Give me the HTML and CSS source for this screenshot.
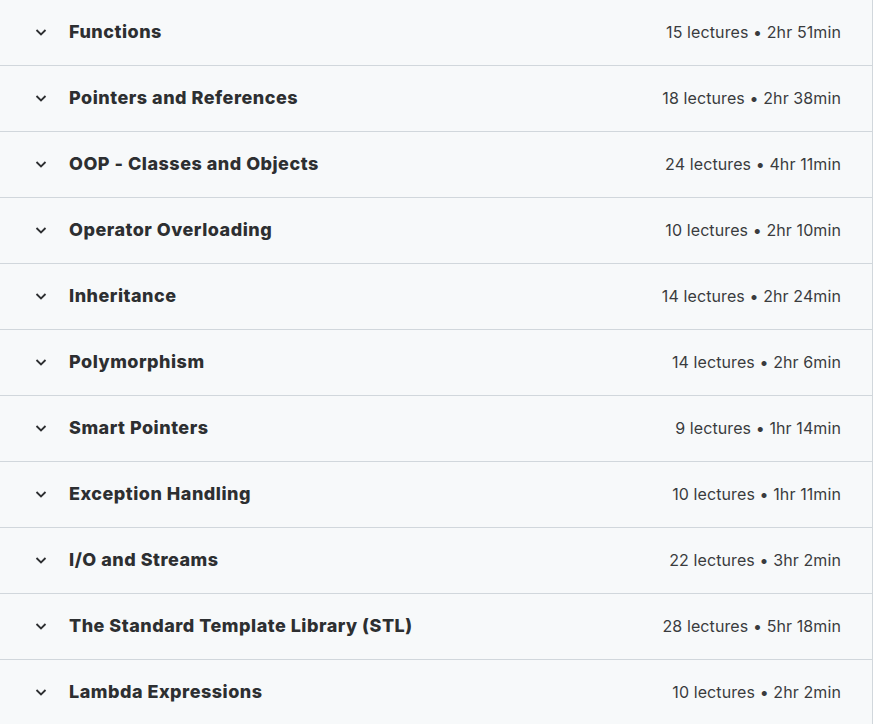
FILE: index.html
```html
<!DOCTYPE html>
<html>
<head>
<meta charset="utf-8">
<link rel="stylesheet" href="styles.css">
</head>
<body>
<div class="curriculum">
  <div class="section"><svg class="chev" viewBox="0 0 16 16"><path d="M3.5 6l4.5 4.5L12.5 6"/></svg><span class="title">Functions</span><span class="meta">15 lectures • 2hr 51min</span></div>
  <div class="section"><svg class="chev" viewBox="0 0 16 16"><path d="M3.5 6l4.5 4.5L12.5 6"/></svg><span class="title">Pointers and References</span><span class="meta">18 lectures • 2hr 38min</span></div>
  <div class="section"><svg class="chev" viewBox="0 0 16 16"><path d="M3.5 6l4.5 4.5L12.5 6"/></svg><span class="title">OOP - Classes and Objects</span><span class="meta">24 lectures • 4hr 11min</span></div>
  <div class="section"><svg class="chev" viewBox="0 0 16 16"><path d="M3.5 6l4.5 4.5L12.5 6"/></svg><span class="title">Operator Overloading</span><span class="meta">10 lectures • 2hr 10min</span></div>
  <div class="section"><svg class="chev" viewBox="0 0 16 16"><path d="M3.5 6l4.5 4.5L12.5 6"/></svg><span class="title">Inheritance</span><span class="meta">14 lectures • 2hr 24min</span></div>
  <div class="section"><svg class="chev" viewBox="0 0 16 16"><path d="M3.5 6l4.5 4.5L12.5 6"/></svg><span class="title">Polymorphism</span><span class="meta">14 lectures • 2hr 6min</span></div>
  <div class="section"><svg class="chev" viewBox="0 0 16 16"><path d="M3.5 6l4.5 4.5L12.5 6"/></svg><span class="title">Smart Pointers</span><span class="meta">9 lectures • 1hr 14min</span></div>
  <div class="section"><svg class="chev" viewBox="0 0 16 16"><path d="M3.5 6l4.5 4.5L12.5 6"/></svg><span class="title">Exception Handling</span><span class="meta">10 lectures • 1hr 11min</span></div>
  <div class="section"><svg class="chev" viewBox="0 0 16 16"><path d="M3.5 6l4.5 4.5L12.5 6"/></svg><span class="title">I/O and Streams</span><span class="meta">22 lectures • 3hr 2min</span></div>
  <div class="section"><svg class="chev" viewBox="0 0 16 16"><path d="M3.5 6l4.5 4.5L12.5 6"/></svg><span class="title">The Standard Template Library (STL)</span><span class="meta">28 lectures • 5hr 18min</span></div>
  <div class="section"><svg class="chev" viewBox="0 0 16 16"><path d="M3.5 6l4.5 4.5L12.5 6"/></svg><span class="title">Lambda Expressions</span><span class="meta">10 lectures • 2hr 2min</span></div>
</div>
</body>
</html>
```
FILE: styles.css
```css
html, body {
  margin: 0;
  padding: 0;
  background: #f7f9fa;
  height: 100%;
  overflow: hidden;
}
.curriculum {
  width: 872px;
  border-right: 1px solid #d1d7dc;
  min-height: 100%;
  font-family: Inter, "Noto Sans", sans-serif;
  color: #2d2f31;
}
.section {
  display: flex;
  align-items: center;
  height: 63px;
  padding: 0 31px 2px 33px;
  border-bottom: 1px solid #d1d7dc;
}
.chev {
  width: 16px;
  height: 16px;
  flex: none;
  margin-right: 20px;
  fill: none;
  stroke: #2d2f31;
  stroke-width: 1.8;
}
.title {
  font-size: 18px;
  font-weight: 800;
  letter-spacing: 0.5px;
  flex: 1;
}
.meta {
  font-size: 16px;
  font-weight: 400;
  letter-spacing: 0.1px;
  color: #3a3c3e;
}
```
